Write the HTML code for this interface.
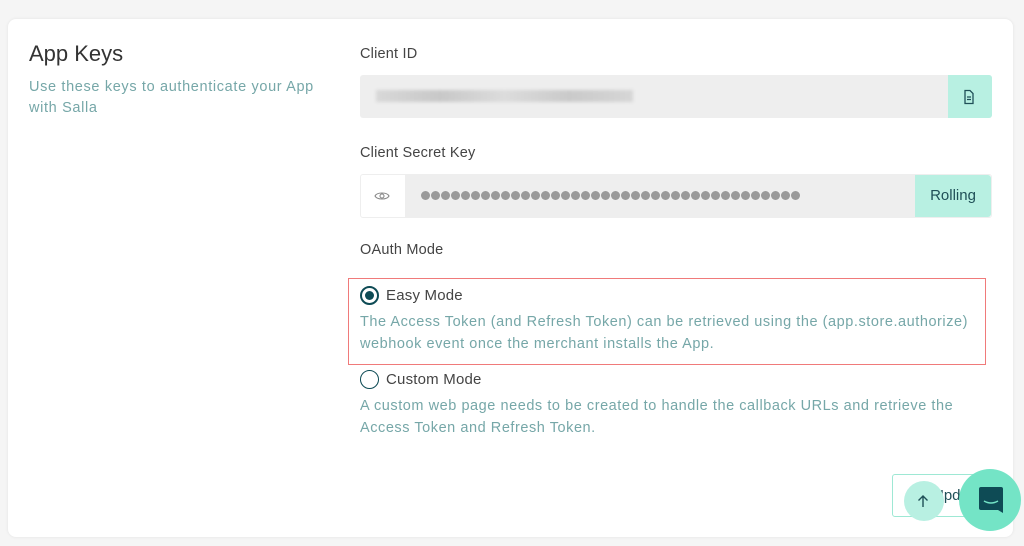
<!DOCTYPE html>
<html><head><style>
body{margin:0;width:1024px;height:546px;background:#f5f5f5;font-family:"Liberation Sans",sans-serif;position:relative;overflow:hidden}
.a{position:absolute;white-space:nowrap}
.card{position:absolute;left:8px;top:19px;width:1005px;height:518px;background:#fff;border-radius:8px;box-shadow:0 0 3px rgba(0,0,0,.08)}
.lbl{font-size:14.5px;color:#444;letter-spacing:0.2px}
.desc{font-size:14px;color:#76a7a8;letter-spacing:0.55px}
.dots{display:flex;gap:1px}
.dots i{display:block;width:9px;height:9px;border-radius:50%;background:#9a9a9a}
</style></head><body>
<div class="card"></div>
<div class="a" style="left:29px;top:41px;font-size:22px;color:#333">App Keys</div>
<div class="a desc" style="left:29px;top:77px;font-size:14.5px;line-height:21px;letter-spacing:0.65px">Use these keys to authenticate your App<br>with Salla</div>

<div class="a lbl" style="left:360px;top:46px">Client ID</div>
<div class="a" style="left:360px;top:75px;width:632px;height:43px;background:#eeeeee;border-radius:3px"></div>
<div class="a" style="left:376px;top:90px;width:257px;height:12px;background:linear-gradient(90deg,#d8d8d8,#c8c8c8,#dcdcdc,#cacaca,#d6d6d6);filter:blur(1.5px)"></div>
<div class="a" style="left:948px;top:75px;width:44px;height:43px;background:#b8f0e2;border-radius:0 3px 3px 0"></div>
<svg class="a" style="left:962px;top:89px" width="14" height="16" viewBox="0 0 14 16"><path d="M3 1.5h5l3 3v10H3z" fill="none" stroke="#1f4f57" stroke-width="1.3"/><path d="M5 8h4M5 10.5h4" stroke="#1f4f57" stroke-width="1.2"/></svg>

<div class="a lbl" style="left:360px;top:145px">Client Secret Key</div>
<div class="a" style="left:360px;top:174px;width:630px;height:42px;border:1px solid #eee;border-radius:3px;background:#fff"></div>
<div class="a" style="left:405px;top:175px;width:510px;height:42px;background:#eeeeee"></div>
<svg class="a" style="left:374px;top:189px" width="16" height="14" viewBox="0 0 16 14"><path d="M1 7c2-4 12-4 14 0c-2 4-12 4-14 0z" fill="none" stroke="#888" stroke-width="1.1"/><circle cx="8" cy="7" r="2" fill="none" stroke="#888" stroke-width="1.1"/></svg>
<div class="a dots" style="left:421px;top:191px"><i></i><i></i><i></i><i></i><i></i><i></i><i></i><i></i><i></i><i></i><i></i><i></i><i></i><i></i><i></i><i></i><i></i><i></i><i></i><i></i><i></i><i></i><i></i><i></i><i></i><i></i><i></i><i></i><i></i><i></i><i></i><i></i><i></i><i></i><i></i><i></i><i></i><i></i></div>
<div class="a" style="left:915px;top:175px;width:76px;height:42px;background:#b8f0e2;border-radius:0 3px 3px 0;font-size:15px;color:#1f4f57;text-align:center;line-height:42px">Rolling</div>

<div class="a lbl" style="left:360px;top:242px">OAuth Mode</div>
<div class="a" style="left:348px;top:278px;width:636px;height:85px;border:1px solid #f07a7a"></div>
<div class="a" style="left:360px;top:286px;width:15px;height:15px;border:2px solid #0e4b55;border-radius:50%"></div>
<div class="a" style="left:365px;top:291px;width:9px;height:9px;background:#0e4b55;border-radius:50%"></div>
<div class="a lbl" style="left:386px;top:287px;font-size:15px">Easy Mode</div>
<div class="a desc" style="left:360px;top:311px;font-size:14.5px;line-height:22px">The Access Token (and Refresh Token) can be retrieved using the (app.store.authorize)<br>webhook event once the merchant installs the App.</div>
<div class="a" style="left:360px;top:370px;width:17px;height:17px;border:1.3px solid #0e4b55;border-radius:50%"></div>
<div class="a lbl" style="left:386px;top:371px;font-size:15px">Custom Mode</div>
<div class="a desc" style="left:360px;top:395px;font-size:14.5px;line-height:22px">A custom web page needs to be created to handle the callback URLs and retrieve the<br>Access Token and Refresh Token.</div>

<div class="a" style="left:892px;top:474px;width:90px;height:41px;border:1px solid #9ee8d4;border-radius:3px;font-size:15px;color:#1f4f57;line-height:41px;text-indent:40px">Update</div>
<div class="a" style="left:904px;top:481px;width:40px;height:40px;border-radius:50%;background:#b8f0e2"></div>
<svg class="a" style="left:917px;top:494px" width="12" height="14" viewBox="0 0 12 14"><path d="M6 13V2M1.5 6.5L6 2l4.5 4.5" fill="none" stroke="#1f4f57" stroke-width="1.4"/></svg>
<div class="a" style="left:959px;top:469px;width:62px;height:62px;border-radius:50%;background:#74e4c6"></div>
<svg class="a" style="left:978px;top:486px" width="26" height="28" viewBox="0 0 26 28"><path d="M3 1h20a2 2 0 0 1 2 2v24l-5-3H3a2 2 0 0 1-2-2V3a2 2 0 0 1 2-2z" fill="#0e4b55"/><path d="M6 15q7 4 14 0" fill="none" stroke="#74e4c6" stroke-width="1.5"/></svg>
</body></html>
